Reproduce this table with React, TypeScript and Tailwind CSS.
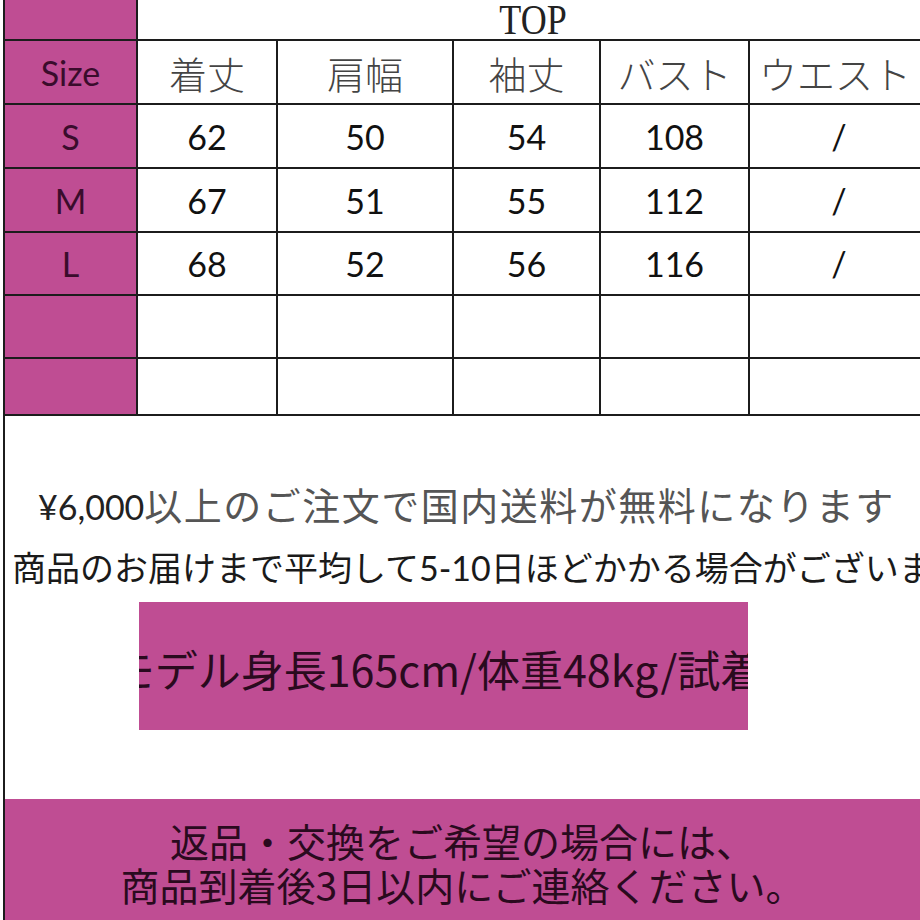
const MAGENTA = "bg-[#bf4d93]";

const headers = ["着丈", "肩幅", "袖丈", "バスト", "ウエスト"];

const rows = [
  { size: "S", values: ["62", "50", "54", "108", "/"] },
  { size: "M", values: ["67", "51", "55", "112", "/"] },
  { size: "L", values: ["68", "52", "56", "116", "/"] },
  { size: "", values: ["", "", "", "", ""] },
  { size: "", values: ["", "", "", "", ""] },
];

const latin = { fontFamily: "Lato, 'Noto Sans', sans-serif" };
const cjk = { fontFamily: "'Noto Sans CJK JP', sans-serif" };

function SizeTable() {
  return (
    <div className="grid grid-cols-[131px_138px_174px_145px_147px_1fr] grid-rows-[39px_62px_62px_62px_61px_61px_55px] gap-[2px] bg-[#1c1c1c] pb-[2px]">
      <div className={MAGENTA} />
      <div className="col-span-5 flex items-center justify-center bg-white pl-[8px]">
        <span
          className="inline-block scale-y-[1.2] text-[36px] leading-none text-[#222]"
          style={{ fontFamily: "'Liberation Serif', serif" }}
        >
          TOP
        </span>
      </div>

      <div
        className={`${MAGENTA} flex items-center justify-center text-[34px] text-[#3a0c2c]`}
        style={latin}
      >
        Size
      </div>
      {headers.map((h) => (
        <div
          key={h}
          className="flex items-center justify-center overflow-hidden whitespace-nowrap bg-white text-[38px] font-light text-[#444]"
          style={cjk}
        >
          {h}
        </div>
      ))}

      {rows.map((row, i) => (
        <>
          <div
            key={`s${i}`}
            className={`${MAGENTA} flex items-center justify-center text-[34px] text-[#3a0c2c]`}
            style={latin}
          >
            {row.size}
          </div>
          {row.values.map((v, j) => (
            <div
              key={`${i}-${j}`}
              className={`flex items-center justify-center bg-white text-[34px] text-[#111] ${j === 4 ? "pl-[8px]" : ""}`}
              style={latin}
            >
              {v}
            </div>
          ))}
        </>
      ))}
    </div>
  );
}

export default function App() {
  return (
    <div className="h-[920px] w-[920px] overflow-hidden bg-white pl-[3px]">
      <div className="flex h-full flex-col border-l-2 border-[#1c1c1c]">
        <SizeTable />

        <div className="pt-[68px]">
          <div
            className="whitespace-nowrap pl-[33px] text-[38px] leading-[40px] tracking-[1.5px] text-[#555]"
            style={cjk}
          >
            <span className="text-[34px] tracking-normal text-[#222]" style={latin}>
              ¥6,000
            </span>
            以上のご注文で国内送料が無料になります
          </div>
          <div
            className="mt-[20px] whitespace-nowrap pl-[7px] text-[34px] leading-[40px] text-[#1a1a1a]"
            style={cjk}
          >
            商品のお届けまで平均して
            <span style={latin}>5-10</span>
            日ほどかかる場合がございます
          </div>
        </div>

        <div className="pl-[134px] pt-[14px]">
          <div
            className={`${MAGENTA} flex h-[128px] w-[609px] items-center justify-center overflow-hidden whitespace-nowrap text-[43px] text-[#2a0a1e]`}
            style={cjk}
          >
            <span className="pt-[4px] pr-[12px]">モデル身長165cm/体重48kg/試着</span>
          </div>
        </div>

        <div
          className={`${MAGENTA} mt-[69px] flex flex-1 flex-col items-center pt-[19px] text-[39px] leading-[44px] text-[#2a0a1e]`}
          style={cjk}
        >
          <span>返品・交換をご希望の場合には、</span>
          <span>商品到着後3日以内にご連絡ください。</span>
        </div>
      </div>
    </div>
  );
}
